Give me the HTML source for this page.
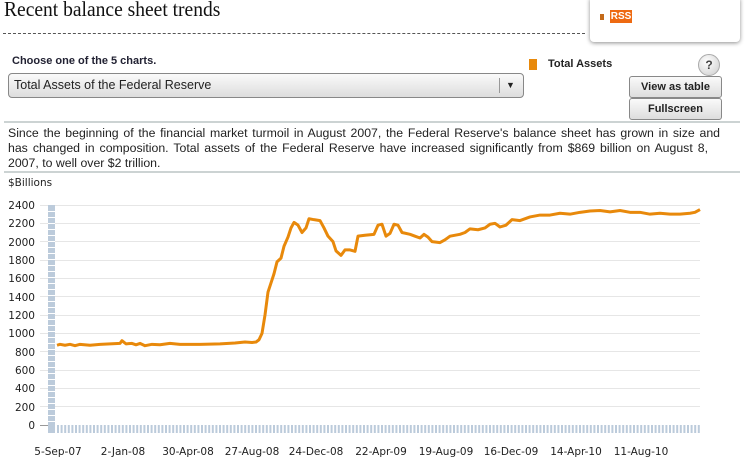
<!DOCTYPE html>
<html><head><style>
body{margin:0;width:745px;height:461px;overflow:hidden;background:#fff;font-family:"Liberation Sans","DejaVu Sans",sans-serif;position:relative;color:#222}
.a{position:absolute}
.title{left:4px;top:-3px;font-family:"Liberation Serif",serif;font-size:21px;color:#111;transform:scaleX(.93);transform-origin:left}
.dash{left:3px;top:33px;width:582px;border-top:1px dashed #555}
.rss{left:590px;top:-2px;width:150px;height:44px;background:#fff;border-radius:0 0 4px 4px;box-shadow:0 1px 4px rgba(0,0,0,.45)}
.btn{background:linear-gradient(#fafafa,#ddd);border:1px solid #888;border-radius:3px;font-weight:bold;font-size:11px;text-align:center;color:#222}
.pl{position:absolute;left:8px;width:712px;font-size:12.3px;white-space:nowrap;text-align:justify;text-align-last:justify;color:#222}
</style></head><body>
<div class="a title">Recent balance sheet trends</div>
<div class="a dash"></div>
<div class="a rss"><div class="a" style="left:10px;top:16px;width:4px;height:6px;background:#c46a1a"></div><div class="a" style="left:20px;top:12px;width:22px;height:13px;background:#ee6a12;color:#fff;font-size:10px;font-weight:bold;line-height:13px;text-align:center">RSS</div></div>
<div class="a" style="left:12px;top:55px;font-size:11px;font-weight:bold;color:#223">Choose one of the 5 charts.</div>
<div class="a btn" style="left:8px;top:73px;width:514px;height:23px;text-align:left;font-weight:normal;font-size:12.5px;line-height:23px;border-radius:4px"><span style="padding-left:5px">Total Assets of the Federal Reserve</span><div class="a" style="left:490px;top:4px;height:15px;border-left:1px solid #999"></div><div class="a" style="left:497px;top:0;font-size:9px">▼</div></div>
<div class="a" style="left:529px;top:59px;width:8px;height:11px;background:#e8890b"></div>
<div class="a" style="left:548px;top:58px;font-size:11px;font-weight:bold">Total Assets</div>
<div class="a" style="left:698px;top:54px;width:20px;height:20px;border-radius:50%;background:radial-gradient(circle at 40% 35%,#fff,#ccc);border:1px solid #aaa;font-size:12px;font-weight:bold;text-align:center;line-height:20px;color:#444">?</div>
<div class="a btn" style="left:629px;top:76px;width:91px;height:20px;line-height:20px">View as table</div>
<div class="a btn" style="left:629px;top:98px;width:91px;height:20px;line-height:20px">Fullscreen</div>
<div class="a" style="left:4px;top:121px;width:736px;border-top:2px solid #ccd3d3"></div>
<div class="pl" style="top:126px">Since the beginning of the financial market turmoil in August 2007, the Federal Reserve's balance sheet has grown in size and</div>
<div class="pl" style="top:141px;width:700px">has changed in composition. Total assets of the Federal Reserve have increased significantly from $869 billion on August 8,</div>
<div class="pl" style="top:156px;width:auto;text-align-last:auto">2007, to well over $2 trillion.</div>
<div class="a" style="left:4px;top:171px;width:736px;border-top:2px solid #ccd3d3"></div>
<div class="a" style="left:8px;top:177px;font-size:11px;font-family:'DejaVu Sans',sans-serif;font-size:10.5px">$Billions</div>
<svg class="a" style="left:0;top:0" width="745" height="461">
<g font-family="DejaVu Sans,sans-serif" font-size="10.5" fill="#222" text-anchor="end">
<text x="35" y="209">2400</text><text x="35" y="227">2200</text><text x="35" y="246">2000</text><text x="35" y="264">1800</text><text x="35" y="282">1600</text><text x="35" y="301">1400</text><text x="35" y="319">1200</text><text x="35" y="337">1000</text><text x="35" y="356">800</text><text x="35" y="374">600</text><text x="35" y="392">400</text><text x="35" y="411">200</text><text x="35" y="429">0</text>
</g>
<g stroke="#e6e6e6" stroke-width="1">
<line x1="40" y1="205.5" x2="700" y2="205.5"/><line x1="40" y1="223.5" x2="700" y2="223.5"/><line x1="40" y1="241.5" x2="700" y2="241.5"/><line x1="40" y1="260.5" x2="700" y2="260.5"/><line x1="40" y1="278.5" x2="700" y2="278.5"/><line x1="40" y1="296.5" x2="700" y2="296.5"/><line x1="40" y1="315.5" x2="700" y2="315.5"/><line x1="40" y1="333.5" x2="700" y2="333.5"/><line x1="40" y1="351.5" x2="700" y2="351.5"/><line x1="40" y1="370.5" x2="700" y2="370.5"/><line x1="40" y1="388.5" x2="700" y2="388.5"/><line x1="40" y1="406.5" x2="700" y2="406.5"/><line x1="40" y1="425.5" x2="48" y2="425.5" stroke="#999"/>
</g>
<rect x="48" y="205" width="7" height="228" fill="#bccbdb"/>
<g stroke="#fff" stroke-width="1"><path d="M48 211.5h7M48 217.5h7M48 223.5h7M48 229.5h7M48 235.5h7M48 241.5h7M48 247.5h7M48 253.5h7M48 259.5h7M48 265.5h7M48 271.5h7M48 277.5h7M48 283.5h7M48 289.5h7M48 295.5h7M48 301.5h7M48 307.5h7M48 313.5h7M48 319.5h7M48 325.5h7M48 331.5h7M48 337.5h7M48 343.5h7M48 349.5h7M48 355.5h7M48 361.5h7M48 367.5h7M48 373.5h7M48 379.5h7M48 385.5h7M48 391.5h7M48 397.5h7M48 403.5h7M48 409.5h7M48 415.5h7M48 421.5h7"/></g>
<line x1="57" y1="429" x2="700" y2="429" stroke="#bccbdb" stroke-width="8" stroke-dasharray="2 1.6"/>
<g transform="translate(0,425) scale(1,-0.091667)">
<polyline fill="none" stroke="#e8890b" stroke-width="3" vector-effect="non-scaling-stroke" stroke-linejoin="round" points="57,870 60,880 65,870 70,880 75,865 80,880 90,870 100,880 110,885 120,890 122,920 126,885 132,890 136,875 140,890 145,865 152,880 160,875 170,890 180,880 200,880 220,885 235,895 245,905 252,900 256,905 259,930 262,1000 265,1200 268,1450 271,1550 274,1650 277,1780 281,1820 284,1950 288,2050 291,2150 294,2210 298,2180 302,2100 306,2150 309,2250 314,2240 320,2230 324,2150 328,2060 333,2000 336,1900 341,1850 345,1910 350,1910 355,1895 358,2060 365,2070 374,2080 378,2180 382,2190 386,2060 390,2090 394,2190 398,2180 402,2100 410,2080 415,2060 420,2040 424,2080 428,2050 432,2000 440,1990 445,2020 450,2060 460,2080 465,2100 470,2140 478,2130 485,2150 490,2190 495,2200 500,2160 506,2180 512,2240 520,2230 530,2270 540,2290 550,2290 560,2310 570,2300 580,2320 590,2335 600,2340 610,2325 620,2340 630,2320 640,2320 650,2300 660,2310 670,2300 680,2300 690,2310 695,2320 700,2350"/>
</g>
<g font-family="DejaVu Sans,sans-serif" font-size="10.5" fill="#222" text-anchor="middle">
<text x="58" y="455">5-Sep-07</text><text x="123" y="455">2-Jan-08</text><text x="188" y="455">30-Apr-08</text><text x="252" y="455">27-Aug-08</text><text x="316" y="455">24-Dec-08</text><text x="381" y="455">22-Apr-09</text><text x="446" y="455">19-Aug-09</text><text x="511" y="455">16-Dec-09</text><text x="576" y="455">14-Apr-10</text><text x="641" y="455">11-Aug-10</text>
</g>
</svg>
</body></html>
